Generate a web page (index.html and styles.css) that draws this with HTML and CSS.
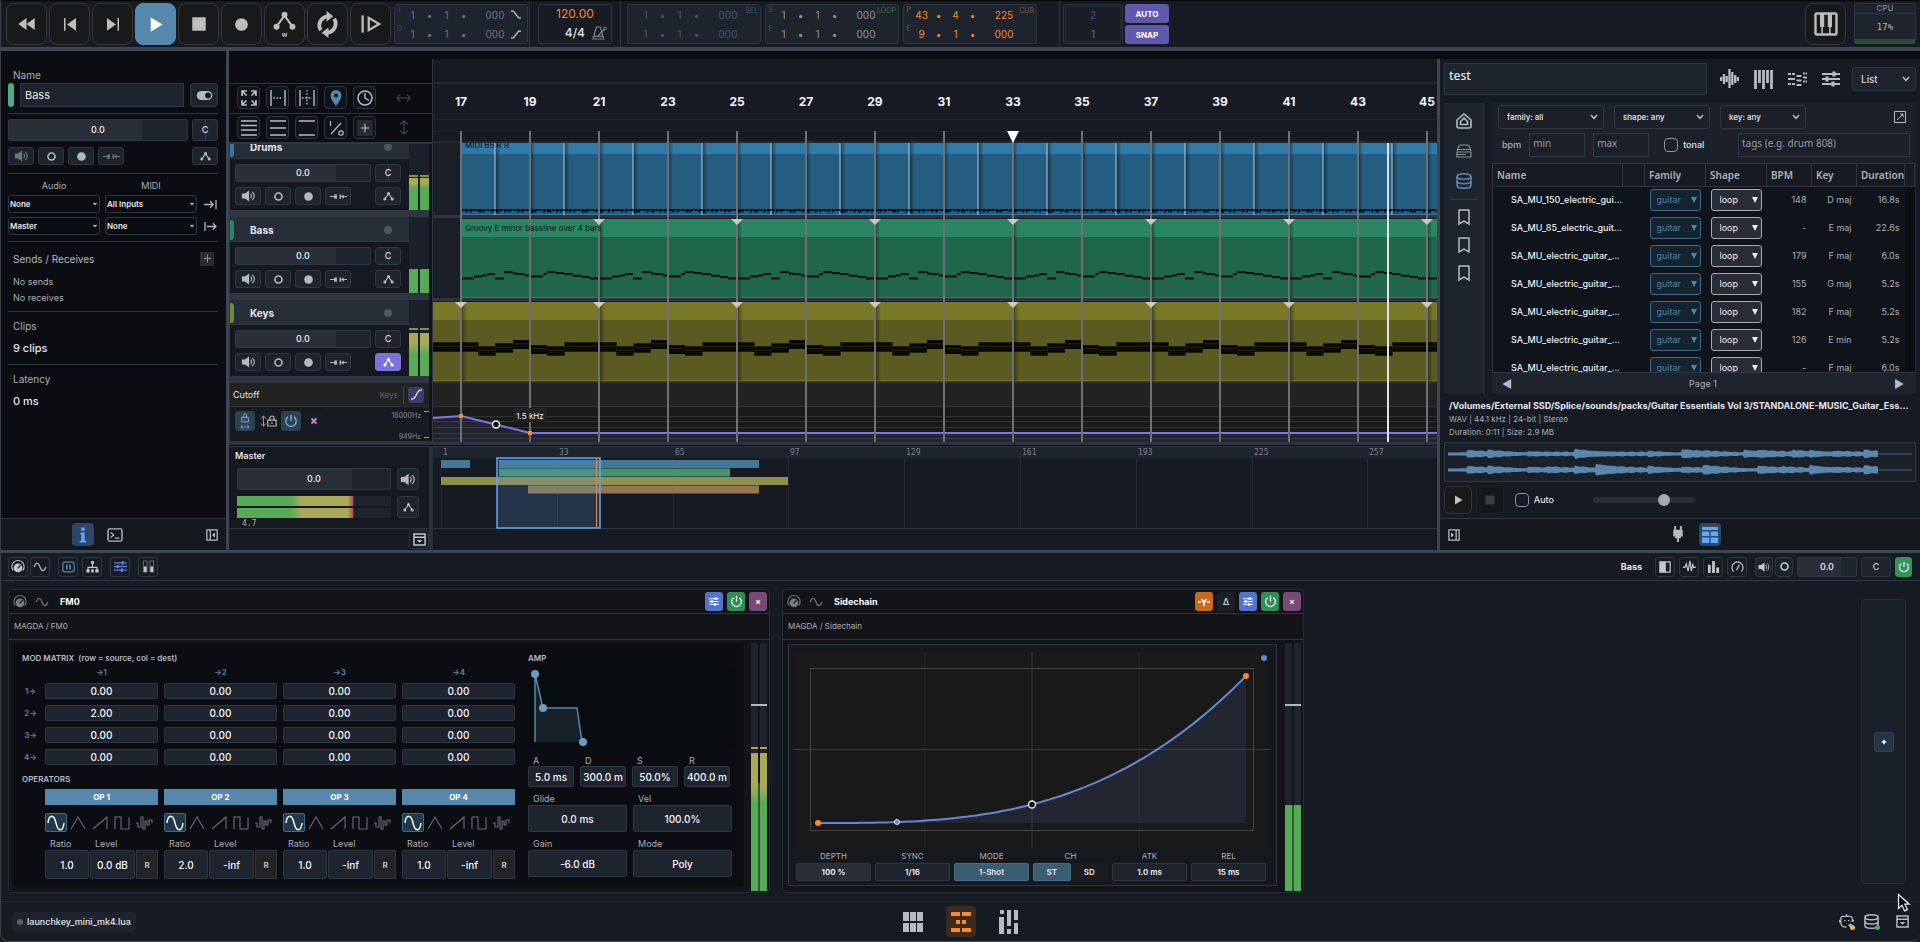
FILE: index.html
```html
<!DOCTYPE html>
<html lang="en">
<head>
<meta charset="utf-8">
<title>MAGDA</title>
<link rel="stylesheet" href="styles.css">
</head>
<body>
<svg class="sprite" aria-hidden="true">
  <symbol id="rewind" viewBox="0 0 24 24"><path fill="currentColor" d="M12 4v16L1 12zM23 4v16l-11-8z"/></symbol>
  <symbol id="prev" viewBox="0 0 24 24"><path fill="currentColor" d="M4 4h2v17H4zM20 4v17L8 12.500z"/></symbol>
  <symbol id="next" viewBox="0 0 24 24"><path fill="currentColor" d="M18 4h2v17h-2zM4 4v17l12-8.500z"/></symbol>
  <symbol id="play" viewBox="0 0 24 24"><path fill="currentColor" d="M6 3v18l15-9z"/></symbol>
  <symbol id="stop" viewBox="0 0 24 24"><path fill="currentColor" d="M3 3h18v18H3z"/></symbol>
  <symbol id="dot" viewBox="0 0 24 24"><circle cx="12" cy="12" r="8" fill="currentColor"/></symbol>
  <symbol id="ring" viewBox="0 0 24 24"><circle cx="12" cy="12" r="6.500" fill="none" stroke="currentColor" stroke-width="3"/></symbol>
  <symbol id="nodes" viewBox="0 0 24 24"><path d="M4 17l8-11 8 11" fill="none" stroke="currentColor" stroke-width="2.600"/><g fill="currentColor"><circle cx="4" cy="17.500" r="3.400"/><circle cx="12" cy="5.500" r="3.400"/><circle cx="20" cy="17.500" r="3.400"/></g></symbol>
  <symbol id="nodesw" viewBox="0 0 24 30"><path d="M4 17l8-11 8 11" fill="none" stroke="currentColor" stroke-width="2.200"/><g fill="currentColor"><circle cx="3.500" cy="18" r="3.200"/><circle cx="12" cy="5" r="3.200"/><circle cx="20.500" cy="18" r="3.200"/></g><text x="12" y="28.500" text-anchor="middle" font-size="7" font-weight="700" fill="currentColor">w</text></symbol>
  <symbol id="loop" viewBox="0 0 24 28"><path d="M5 20A9.500 9.500 0 0 1 12 5.500M19 8a9.500 9.500 0 0 1-7 14.500" fill="none" stroke="currentColor" stroke-width="4"/><path fill="currentColor" d="M11 0l7 5.500-7 5.500zM13 28l-7-5.500 7-5.500z"/></symbol>
  <symbol id="playfrom" viewBox="0 0 24 24"><path fill="none" stroke="currentColor" stroke-width="2.600" d="M3 2v20M10 5l12 7-12 7z"/></symbol>
  <symbol id="falloff" viewBox="0 0 14 10"><path fill="none" stroke="currentColor" stroke-width="1.600" d="M1 1h3l6 8h3"/></symbol>
  <symbol id="riseup" viewBox="0 0 14 10"><path fill="none" stroke="currentColor" stroke-width="1.600" d="M1 9h3l6-8h3"/></symbol>
  <symbol id="metro" viewBox="0 0 24 24"><path fill="none" stroke="currentColor" stroke-width="1.800" d="M8 3h6l5 18H3zM4 17h14M10 17L20 6"/><circle cx="21" cy="5" r="2" fill="none" stroke="currentColor" stroke-width="1.500"/></symbol>
  <symbol id="piano" viewBox="0 0 24 24"><rect x="1.500" y="1.500" width="21" height="21" rx="1.500" fill="none" stroke="currentColor" stroke-width="2.400"/><path fill="currentColor" d="M6 2h4.200v13H6zM13.800 2H18v13h-4.200z"/><path d="M8.100 14v8M15.900 14v8" stroke="currentColor" stroke-width="1.500"/></symbol>
  <symbol id="toggle" viewBox="0 0 24 14"><rect width="24" height="14" rx="7" fill="currentColor"/><circle cx="17.500" cy="7" r="4.500" fill="#14181e"/></symbol>
  <symbol id="speaker" viewBox="0 0 24 20"><path fill="currentColor" d="M1 6h5l7-5v18l-7-5H1z"/><path fill="none" stroke="currentColor" stroke-width="1.800" d="M15.500 6c2 2.500 2 5.500 0 8M18.500 3c4 4.500 4 9.500 0 14"/></symbol>
  <symbol id="link" viewBox="0 0 32 12"><path fill="currentColor" d="M0 5h8V2h5v8H8V7H0zM18 2h3v8h-3zM21 6l5-4v3h6v2h-6v3z"/></symbol>
  <symbol id="toin" viewBox="0 0 14 12"><path fill="none" stroke="currentColor" stroke-width="1.400" d="M13 1v10M0 6h10M6.500 2.500L10 6l-3.500 3.500"/></symbol>
  <symbol id="toout" viewBox="0 0 14 12"><path fill="none" stroke="currentColor" stroke-width="1.400" d="M1 1v10M3 6h10M9.500 2.500L13 6 9.500 9.500"/></symbol>
  <symbol id="plus" viewBox="0 0 12 12"><path stroke="currentColor" stroke-width="1.400" d="M6 1v10M1 6h10"/></symbol>
  <symbol id="plusb" viewBox="0 0 12 12"><path stroke="currentColor" stroke-width="3" d="M6 1.500v9M1.500 6h9"/></symbol>
  <symbol id="info" viewBox="0 0 12 18"><path fill="currentColor" d="M4 0h4v4H4zM3 6h5v10h2v2H2v-2h2V8H3z"/></symbol>
  <symbol id="term" viewBox="0 0 18 16"><rect x="1" y="1" width="16" height="14" rx="2" fill="none" stroke="currentColor" stroke-width="1.600"/><path fill="none" stroke="currentColor" stroke-width="1.500" d="M4 5l3.500 3L4 11M9 11.500h5"/></symbol>
  <symbol id="dock" viewBox="0 0 14 14"><path fill="none" stroke="currentColor" stroke-width="1.500" d="M1 1h12v12H1zM5 1v12"/><path fill="currentColor" d="M10.500 4v6L7 7z"/></symbol>
  <symbol id="dockr" viewBox="0 0 14 14"><path fill="none" stroke="currentColor" stroke-width="1.500" d="M1 1h12v12H1zM9.500 1v12"/><path fill="currentColor" d="M3.500 4v6L7 7z"/></symbol>
  <symbol id="expand" viewBox="0 0 16 16"><path fill="none" stroke="currentColor" stroke-width="1.700" d="M1 6V1h5M1.500 1.500l4 4M10 1h5v5M14.500 1.500l-4 4M1 10v5h5M1.500 14.500l4-4M15 10v5h-5M14.500 14.500l-4-4"/></symbol>
  <symbol id="fitsel" viewBox="0 0 16 16"><path stroke="currentColor" stroke-width="1.400" d="M1 0v16M15 0v16"/><path stroke="currentColor" stroke-width="1.400" stroke-dasharray="1.500 1.500" d="M3.500 8h9"/></symbol>
  <symbol id="gridsnap" viewBox="0 0 16 16"><path stroke="currentColor" stroke-width="1.400" d="M1 0v16M15 0v16"/><path stroke="currentColor" stroke-width="1.300" stroke-dasharray="1.600 1.600" d="M3 8h10M8 0v16"/></symbol>
  <symbol id="pin" viewBox="0 0 12 16"><path fill="currentColor" fill-rule="evenodd" d="M6 0a5.500 5.500 0 0 1 5.500 5.500C11.500 9.500 6 16 6 16S.5 9.500.5 5.500A5.500 5.500 0 0 1 6 0zm0 3.600a2 2 0 1 0 0 4 2 2 0 0 0 0-4z"/></symbol>
  <symbol id="clock" viewBox="0 0 16 16"><circle cx="8" cy="8" r="7" fill="none" stroke="currentColor" stroke-width="1.500"/><path fill="none" stroke="currentColor" stroke-width="1.400" d="M8 3v5l4 2.500"/></symbol>
  <symbol id="harrow" viewBox="0 0 16 10"><path fill="none" stroke="currentColor" stroke-width="1.200" d="M1 5h14M4.500 1L1 5l3.500 4M11.500 1L15 5l-3.500 4"/></symbol>
  <symbol id="varrow" viewBox="0 0 10 16"><path fill="none" stroke="currentColor" stroke-width="1.200" d="M5 1v14M1 4.500L5 1l4 3.500M1 11.500L5 15l4-3.500"/></symbol>
  <symbol id="rows4" viewBox="0 0 16 16"><path stroke="currentColor" stroke-width="1.500" d="M0 1h16M0 5.500h16M0 10h16M0 15h16"/></symbol>
  <symbol id="rows3" viewBox="0 0 16 16"><path stroke="currentColor" stroke-width="1.500" d="M0 1h16M0 8h16M0 15h16"/></symbol>
  <symbol id="rows2" viewBox="0 0 16 16"><path stroke="currentColor" stroke-width="1.500" d="M0 1h16M0 15h16"/></symbol>
  <symbol id="io" viewBox="0 0 16 16"><path fill="none" stroke="currentColor" stroke-width="1.200" d="M2.500 1v5M3 14L13 3"/><circle cx="13" cy="13" r="2.200" fill="none" stroke="currentColor" stroke-width="1.200"/></symbol>
  <symbol id="scurve" viewBox="0 0 12 12"><path fill="none" stroke="currentColor" stroke-width="1.400" d="M0 11c8 0 4-10 12-10"/></symbol>
  <symbol id="lock" viewBox="0 0 12 14"><path fill="none" stroke="currentColor" stroke-width="1.400" d="M1 6h10v7H1zM3.500 6V3.500a2.500 2.500 0 0 1 5 0V6M6 8.500v2"/></symbol>
  <symbol id="power" viewBox="0 0 16 16"><path fill="none" stroke="currentColor" stroke-width="1.500" d="M8 1v7M4.500 3.300a6 6 0 1 0 7 0"/></symbol>
  <symbol id="x" viewBox="0 0 8 8"><path stroke="currentColor" stroke-width="1.800" d="M1.500 1.500l5 5M6.500 1.500l-5 5"/></symbol>
  <symbol id="tray" viewBox="0 0 14 14"><path fill="none" stroke="currentColor" stroke-width="1.600" d="M1 1h12v12H1zM1 4.500h12"/><path fill="currentColor" d="M4 7.500h6L7 10.500z"/></symbol>
  <symbol id="wavebars" viewBox="0 0 19 20"><path stroke="currentColor" stroke-width="2.300" d="M1.200 8v4M4 5v10M6.700 7v6M9.500 0v19M12.300 3v13M15.200 6v8M18 8v4"/></symbol>
  <symbol id="keys" viewBox="0 0 19 19"><path stroke="currentColor" stroke-width="2.800" d="M1.500 0v19M5.500 0v13M9.500 0v19M13.500 0v13M17.500 0v19"/></symbol>
  <symbol id="steps" viewBox="0 0 19 16"><path fill="currentColor" d="M0 2h3v2H0zM4 2h3v2H4zM0 7h7v2H0zM0 12h3v2H0zM4 12h3v2H4zM8.500 4h5v2h-5zM8.500 8.500h5v2h-5zM8.500 13h5v2h-5zM15 1.500h1.800v2H15zM17.500 1.500H19v2h-1.500zM15 5.500h4v2h-4zM15 9.500h1.800v2H15zM17.500 9.500H19v2h-1.500z"/></symbol>
  <symbol id="sliders" viewBox="0 0 18 16"><path stroke="currentColor" stroke-width="1.800" d="M0 3h18M0 8h18M0 13h18"/><path stroke="currentColor" stroke-width="3.200" d="M12 .5v5M5 5.500v5M11 10.500v5"/></symbol>
  <symbol id="chev" viewBox="0 0 8 6"><path fill="none" stroke="currentColor" stroke-width="1.400" d="M1 1l3 3.500L7 1"/></symbol>
  <symbol id="tick" viewBox="0 0 8 6"><path fill="none" stroke="currentColor" stroke-width="1.200" d="M2.500 2L4 3.500 5.500 2"/></symbol>
  <symbol id="tri" viewBox="0 0 8 6"><path fill="currentColor" d="M1 0h6L4 6z"/></symbol>
  <symbol id="home" viewBox="0 0 16 16"><path fill="none" stroke="currentColor" stroke-width="1.600" d="M1 7l7-6 7 6v6a2 2 0 0 1-2 2H3a2 2 0 0 1-2-2zM4.500 11.500V8.500L8 5l3.500 3.500v3z"/></symbol>
  <symbol id="drive" viewBox="0 0 16 14"><path fill="none" stroke="currentColor" stroke-width="1.200" d="M1 7l2-5q.5-1 2-1h6q1.500 0 2 1l2 5M1 5.500h14M1 8h14v5H1zM1 10.500h9"/></symbol>
  <symbol id="db" viewBox="0 0 16 16"><g fill="none" stroke="currentColor" stroke-width="1.600"><ellipse cx="8" cy="3.500" rx="7" ry="2.700"/><path d="M1 3.500v9c0 1.500 3 2.700 7 2.700s7-1.200 7-2.700v-9M1 8c0 1.500 3 2.700 7 2.700s7-1.200 7-2.700"/></g></symbol>
  <symbol id="mark" viewBox="0 0 12 16"><path fill="none" stroke="currentColor" stroke-width="1.500" d="M1 1h10v14l-5-3-5 3z"/></symbol>
  <symbol id="export" viewBox="0 0 12 12"><path fill="none" stroke="currentColor" stroke-width="1" d="M.5 .5h11v11H.5zM3 9l6-6M6 3h3v3"/></symbol>
  <symbol id="plug" viewBox="0 0 12 18"><path fill="currentColor" d="M2 0h2v4h4V0h2v4h1v7H9v2H7v4H5v-4H3v-2H1V4h1z"/></symbol>
  <symbol id="table" viewBox="0 0 16 16"><path fill="currentColor" d="M0 0h16v3H0zM0 4.500h7.300v4.500H0zM8.700 4.500H16v4.500H8.700zM0 10.500h7.300V16H0zM8.700 10.500H16V16H8.700z"/></symbol>
  <symbol id="knob" viewBox="0 0 16 16"><path fill="none" stroke="currentColor" stroke-width="1.200" d="M2.500 12a7 7 0 1 1 11 0"/><circle cx="8" cy="9" r="5" fill="currentColor"/><path stroke="#15181f" stroke-width="1.300" d="M7.500 9.500L11 6"/></symbol>
  <symbol id="sine" viewBox="0 0 16 12"><path fill="none" stroke="currentColor" stroke-width="1.300" d="M1 6c2-6 5-6 7 0s5 6 7 0"/></symbol>
  <symbol id="modbox" viewBox="0 0 16 14"><rect x="1" y="1" width="14" height="12" rx="2.500" fill="none" stroke="currentColor" stroke-width="1.500"/><path fill="none" stroke="currentColor" stroke-width="2" d="M6 4v6M10 4v6"/></symbol>
  <symbol id="tree" viewBox="0 0 16 16"><path fill="none" stroke="currentColor" stroke-width="1.400" d="M8 3v6M2.500 13V9h11v4"/><g fill="currentColor"><circle cx="8" cy="3" r="2"/><path d="M.5 11.500h4v4h-4zM6.500 11.500h3v4h-3zM11.500 11.500h4v4h-4z"/></g></symbol>
  <symbol id="meters" viewBox="0 0 14 14"><path fill="none" stroke="currentColor" opacity=".5" d="M1.500 1h4v12h-4zM8.500 1h4v12h-4z"/><path fill="currentColor" d="M2 7h3v6H2zM9 7h3v6H9z"/></symbol>
  <symbol id="half" viewBox="0 0 14 14"><path fill="none" stroke="currentColor" stroke-width="1.400" d="M1 1h12v12H1z"/><path fill="currentColor" d="M1 1h7v12H1z"/></symbol>
  <symbol id="pulse" viewBox="0 0 14 14"><path fill="none" stroke="currentColor" stroke-width="1.300" d="M0 8h2l1.500-4 2 8L7.500 1 9 12l1.500-7 1 3H14"/></symbol>
  <symbol id="chart" viewBox="0 0 14 14"><path fill="currentColor" d="M1 5h3v9H1zM5.500 1h3v13h-3zM10 8h3v6h-3z"/></symbol>
  <symbol id="gauge" viewBox="0 0 14 14"><path fill="none" stroke="currentColor" stroke-width="1.300" d="M3 12.500a6 6 0 1 1 8 0M6 11l3-6"/></symbol>
  <symbol id="spark" viewBox="0 0 14 14"><path fill="none" stroke="currentColor" stroke-width="1.500" d="M0 7h3.500M10.500 7H14M4 3.500L7 7l3-3.500"/><path fill="currentColor" d="M4 5.500h6L7 10zM6.200 8h1.600v4H6.200z"/></symbol>
  <symbol id="w-sine" viewBox="0 0 18 16"><path fill="none" stroke="currentColor" stroke-width="1.400" d="M1 8c1-9 6-9 8 0s7 9 8 0"/></symbol>
  <symbol id="w-tri" viewBox="0 0 18 16"><path fill="none" stroke="currentColor" stroke-width="1.100" d="M2 14L9 2l7 12"/></symbol>
  <symbol id="w-saw" viewBox="0 0 18 16"><path fill="none" stroke="currentColor" stroke-width="1.100" d="M2 14L16 2v12"/></symbol>
  <symbol id="w-sq" viewBox="0 0 18 16"><path fill="none" stroke="currentColor" stroke-width="1.100" d="M2 14V2h6v12h8V2"/></symbol>
  <symbol id="w-noise" viewBox="0 0 18 16"><path fill="none" stroke="currentColor" stroke-width="1.100" d="M1 8h2v4h3V2h2v12h2V6h2v4h2V5h3v3"/></symbol>
  <symbol id="v-grid" viewBox="0 0 20 20"><path fill="currentColor" d="M0 0h6v9H0zM7 0h6v9H7zM14 0h6v9h-6zM0 11h6v9H0zM7 11h6v9H7zM14 11h6v9h-6z"/></symbol>
  <symbol id="v-arr" viewBox="0 0 20 20"><path fill="currentColor" d="M0 0h9v4H0zM11 0h9v4h-9zM5 8h4v4H5zM11 8h4v4h-4zM0 16h9v4H0zM11 16h9v4h-9z"/></symbol>
  <symbol id="v-mix" viewBox="0 0 20 24"><path fill="currentColor" d="M1 0h4v4H1zM0 7h5v17H0zM8 0h4v16H8zM8 19h4v5H8zM15 0h4v10h-4zM15 13h4v11h-4z"/></symbol>
  <symbol id="robot" viewBox="0 0 16 16"><path fill="none" stroke="currentColor" stroke-width="1.400" d="M8 0v3M4 2.500h8q2 0 2 2v4M2 4.500q0-2 2-2M2 4.500v5q0 4.500 6 4.500M.5 6v3M15.500 6v2M5.500 7h1.500M9.500 7h1.500M12 10v4M10 12h4"/></symbol>
</svg>

<div class="app">
  <header class="topbar">
    <div class="transport" id="transport"></div>
    <div class="posbox punch" data-pos="I|1|1|000|@falloff;O|1|1|000|@riseup"></div>
    <div class="group tempo-group">
      <div class="tempo"><span class="bpm">120.00</span><span class="sig">4/4</span><button class="bare" aria-label="Metronome"><svg width="16" height="16"><use href="#metro"/></svg></button></div>
    </div>
    <div class="group pos-group">
      <div class="posbox sel" data-pos="|1|1|000|SEL;|1|1|000|"></div>
      <div class="posbox loopbox" data-pos="S|1|1|000|LOOP;E|1|1|000|"></div>
      <div class="posbox cur" data-pos="P|43|4|225|CUR;E|9|1|000|"></div>
    </div>
    <div class="group quant-group">
      <div class="quant"><span>2</span><span>1</span></div>
      <div class="modes"><button>AUTO</button><button>SNAP</button></div>
    </div>
    <div class="top-right">
      <button class="tbtn" aria-label="Keyboard"><svg width="24" height="24"><use href="#piano"/></svg></button>
      <div class="cpu"><span>CPU</span><b>17%</b></div>
    </div>
  </header>

  <main class="upper">
    <aside class="inspector">
      <div class="insp-body">
        <label class="lbl" for="tname">Name</label>
        <div class="row name-row"><i class="swatch"></i><input id="tname" class="field" value="Bass"><button class="ib tog" aria-label="Enabled"><svg width="17" height="9"><use href="#toggle"/></svg></button></div>
        <hr>
        <div class="row vol-row"><label class="fader big"><input type="range" value="75" aria-label="Volume"><output>0.0</output></label><button class="ib pan">C</button></div>
        <div class="row btn-row" data-strip="dim"></div>
        <hr>
        <div class="routes">
          <span class="rh">Audio</span><span class="rh">MIDI</span><i></i>
          <label class="pick small"><select aria-label="Audio input"><option>None</option></select><svg width="8" height="6"><use href="#tick"/></svg></label>
          <label class="pick small"><select aria-label="MIDI input"><option>All Inputs</option></select><svg width="8" height="6"><use href="#tick"/></svg></label>
          <svg width="13" height="11"><use href="#toin"/></svg>
          <label class="pick small"><select aria-label="Audio output"><option>Master</option></select><svg width="8" height="6"><use href="#tick"/></svg></label>
          <label class="pick small"><select aria-label="MIDI output"><option>None</option></select><svg width="8" height="6"><use href="#tick"/></svg></label>
          <svg width="13" height="11"><use href="#toout"/></svg>
        </div>
        <hr>
        <div class="sends"><span>Sends / Receives</span><button class="add" aria-label="Add send"><svg width="9" height="9"><use href="#plus"/></svg></button></div>
        <p class="note">No sends</p><p class="note">No receives</p>
        <hr>
        <p class="lbl">Clips</p><p class="val">9 clips</p>
        <hr>
        <p class="lbl">Latency</p><p class="val">0 ms</p>
      </div>
      <footer class="dockbar">
        <span class="dock-tabs"><button class="dtab on" aria-label="Info"><svg width="10" height="16"><use href="#info"/></svg></button><button class="dtab" aria-label="Console"><svg width="16" height="14"><use href="#term"/></svg></button></span>
        <button class="bare" aria-label="Collapse"><svg width="12" height="12"><use href="#dock"/></svg></button>
      </footer>
    </aside>

    <section class="arrange">
      <div class="tools">
        <div class="toolrow" data-icons="expand fitsel gridsnap pin clock harrow"></div>
        <div class="toolrow" data-icons="rows4 rows3 rows2 io plus varrow"></div>
      </div>
      <svg class="ruler" id="ruler" width="100%" height="84"></svg>
      <div class="heads"><div id="heads"></div>
        <div class="auto-head">
          <div class="auto-name"><span>Cutoff</span><em>Keys</em><button class="curve" aria-label="Curve"><svg width="11" height="11"><use href="#scurve"/></svg></button></div>
          <div class="auto-body">
            <button class="ab on stack" aria-label="Lock time"><svg width="8" height="10"><use href="#lock"/></svg><svg width="10" height="6"><use href="#harrow"/></svg></button>
            <button class="ab" aria-label="Lock value"><svg width="7" height="12"><use href="#varrow"/></svg><svg width="10" height="12"><use href="#lock"/></svg></button>
            <button class="ab on" aria-label="Bypass"><svg width="14" height="14"><use href="#power"/></svg></button>
            <button class="ab close" aria-label="Remove"><svg width="8" height="8"><use href="#x"/></svg></button>
            <span class="scale"><i>18000Hz</i><i>949Hz</i></span>
          </div>
        </div>
      </div>
      <div class="lanes"><svg id="lanes" width="100%" height="308"></svg></div>
      <div class="hsplit"></div>
      <div class="master">
        <span class="mname">Master</span>
        <label class="fader big"><input type="range" value="75" aria-label="Master volume"><output>0.0</output></label>
        <button class="ib sq" aria-label="Mute"><svg width="16" height="13"><use href="#speaker"/></svg></button>
        <div class="mmeter"><i></i><i></i><small>4.7</small></div>
        <button class="ib sq" aria-label="Automation"><svg width="13" height="11"><use href="#nodes"/></svg></button>
      </div>
      <svg class="overview" id="overview" width="100%" height="83"></svg>
      <div class="strip"><button class="ib tray" aria-label="Tray"><svg width="13" height="13"><use href="#tray"/></svg></button></div>
      <div class="strip"></div>
    </section>

    <aside class="browser">
      <div class="searchrow">
        <input class="field search" value="test" aria-label="Search">
        <button class="bare" aria-label="Audio"><svg width="19" height="20"><use href="#wavebars"/></svg></button>
        <button class="bare" aria-label="MIDI"><svg width="19" height="19"><use href="#keys"/></svg></button>
        <button class="bare" aria-label="Drums"><svg width="19" height="16"><use href="#steps"/></svg></button>
        <button class="bare" aria-label="Presets"><svg width="18" height="16"><use href="#sliders"/></svg></button>
        <label class="pick list"><select aria-label="View"><option>List</option></select><svg width="8" height="6"><use href="#chev"/></svg></label>
      </div>
      <div class="library">
        <nav class="side">
          <button class="bare" aria-label="Home"><svg width="16" height="16"><use href="#home"/></svg></button>
          <button class="bare dim" aria-label="Drive"><svg width="16" height="14"><use href="#drive"/></svg></button>
          <button class="bare blue" aria-label="Database"><svg width="16" height="16"><use href="#db"/></svg></button>
          <hr>
          <button class="bare" aria-label="Bookmark 1"><svg width="12" height="16"><use href="#mark"/></svg></button>
          <button class="bare" aria-label="Bookmark 2"><svg width="12" height="16"><use href="#mark"/></svg></button>
          <button class="bare" aria-label="Bookmark 3"><svg width="12" height="16"><use href="#mark"/></svg></button>
        </nav>
        <div class="results">
          <div class="filters">
            <label class="pick f1"><select aria-label="Family"><option>family: all</option></select><svg width="8" height="6"><use href="#chev"/></svg></label>
            <label class="pick f2"><select aria-label="Shape"><option>shape: any</option></select><svg width="8" height="6"><use href="#chev"/></svg></label>
            <label class="pick f3"><select aria-label="Key"><option>key: any</option></select><svg width="8" height="6"><use href="#chev"/></svg></label>
            <button class="bare" aria-label="Open"><svg width="12" height="12"><use href="#export"/></svg></button>
          </div>
          <div class="filters second">
            <label for="bmin">bpm</label><input id="bmin" class="field fb" placeholder="min"><input class="field fb" placeholder="max" aria-label="Maximum bpm">
            <label class="chk"><input type="checkbox">tonal</label>
            <input class="field tags" placeholder="tags (e.g. drum 808)" aria-label="Tags">
          </div>
          <div class="tablewrap">
            <table><colgroup><col><col class="c1"><col class="c2"><col class="c2"><col class="c3"><col class="c3"><col class="c4"><col class="c5"></colgroup>
              <thead><tr><th>Name</th><th></th><th>Family</th><th>Shape</th><th>BPM</th><th>Key</th><th>Duration</th><th></th></tr></thead>
              <tbody id="samples"></tbody></table>
          </div>
          <div class="pager"><button class="bare" aria-label="Previous page">◀</button><span>Page 1</span><button class="bare" aria-label="Next page">▶</button></div>
        </div>
      </div>
      <div class="meta"><b>/Volumes/External SSD/Splice/sounds/packs/Guitar Essentials Vol 3/STANDALONE-MUSIC_Guitar_Essentials_Vol_3</b><span>WAV | 44.1 kHz | 24-bit | Stereo</span><span>Duration: 0:11 | Size: 2.9 MB</span></div>
      <div class="wavebox"><svg id="wave" width="100%" height="38" viewBox="0 0 464 38" preserveAspectRatio="none"></svg></div>
      <div class="preview">
        <button class="pv" aria-label="Preview"><svg width="12" height="12"><use href="#play"/></svg></button><button class="pv off" aria-label="Stop preview"><svg width="12" height="12"><use href="#stop"/></svg></button>
        <label class="chk auto"><input type="checkbox">Auto</label>
        <input class="gain" type="range" value="72" aria-label="Preview gain">
      </div>
      <footer class="dockbar">
        <button class="bare" aria-label="Collapse"><svg width="12" height="12"><use href="#dockr"/></svg></button>
        <span class="dock-tabs"><button class="dtab" aria-label="Plugins"><svg width="12" height="17"><use href="#plug"/></svg></button><button class="dtab on" aria-label="Media"><svg width="16" height="16"><use href="#table"/></svg></button></span>
      </footer>
    </aside>
  </main>

  <section class="chainbar">
    <div class="cb-left">
      <button class="cb" aria-label="Macros"><svg width="14" height="14"><use href="#knob"/></svg></button>
      <button class="cb" aria-label="Modulators"><svg width="14" height="10"><use href="#sine"/></svg></button>
      <button class="cb blue gap" aria-label="Racks"><svg width="13" height="12"><use href="#modbox"/></svg></button>
      <button class="cb gap2" aria-label="Tree"><svg width="13" height="13"><use href="#tree"/></svg></button>
      <button class="cb indigo gap" aria-label="Parameters"><svg width="13" height="13"><use href="#sliders"/></svg></button>
      <button class="cb gap" aria-label="Meters"><svg width="13" height="13"><use href="#meters"/></svg></button>
    </div>
    <div class="cb-right">
      <b>Bass</b>
      <button class="cb" aria-label="Panel"><svg width="12" height="12"><use href="#half"/></svg></button>
      <button class="cb" aria-label="Scope"><svg width="13" height="13"><use href="#pulse"/></svg></button>
      <button class="cb" aria-label="Spectrum"><svg width="13" height="13"><use href="#chart"/></svg></button>
      <button class="cb" aria-label="Level"><svg width="13" height="13"><use href="#gauge"/></svg></button>
      <span class="pair"><button class="cb nar" aria-label="Mute"><svg width="12" height="10"><use href="#speaker"/></svg></button><button class="cb nar" aria-label="Solo"><svg width="13" height="13"><use href="#ring"/></svg></button></span>
      <label class="fader"><input type="range" value="75" aria-label="Chain volume"><output>0.0</output></label>
      <button class="cb pan">C</button>
      <button class="cb power" aria-label="Power"><svg width="12" height="12"><use href="#power"/></svg></button>
    </div>
  </section>

  <section class="chain">
    <article class="device fm">
      <header><svg width="14" height="14"><use href="#knob"/></svg><svg width="14" height="10"><use href="#sine"/></svg><h2>FM0</h2>
        <button class="hb indigo" aria-label="Parameters"><svg width="10" height="9"><use href="#sliders"/></svg></button><button class="hb green" aria-label="Power"><svg width="13" height="13"><use href="#power"/></svg></button><button class="hb plum" aria-label="Remove"><svg width="6" height="6"><use href="#x"/></svg></button></header>
      <p class="vendor">MAGDA / FM0</p>
      <div class="dev-body">
        <div class="fm-ui">
          <div class="fm-left">
            <h3>MOD MATRIX&nbsp; (row = source, col = dest)</h3>
            <div class="matrix" id="matrix"></div>
            <h3>OPERATORS</h3>
            <div class="ops" id="ops"></div>
          </div>
          <div class="fm-right">
            <h3>AMP</h3>
            <svg class="env" width="202" height="78"><rect width="202" height="78" rx="3" fill="#070c0e"/><path d="M5 73V5l8 34h34l5 34z" fill="#16212a"/><path d="M5 73V5l8 34h34l5 34" fill="none" stroke="#5688ae" stroke-width="1.500"/><g fill="#6b9cc2"><circle cx="5" cy="5" r="4"/><circle cx="13" cy="39" r="4"/><circle cx="53" cy="73" r="4"/></g></svg>
            <div class="adsr"><label>A<input value="5.0 ms"></label><label>D<input value="300.0 m"></label><label>S<input value="50.0%"></label><label>R<input value="400.0 m"></label></div>
            <div class="pairs"><label>Glide<input value="0.0 ms"></label><label>Vel<input value="100.0%"></label><label>Gain<input value="-6.0 dB"></label><label>Mode<input value="Poly"></label></div>
          </div>
        </div>
        <svg class="vmeter" width="17" height="248"><defs><linearGradient id="vg" x1="0" x2="0" y1="0" y2="1"><stop offset=".25" stop-color="#aaa957"/><stop offset=".36" stop-color="#57ab57"/></linearGradient></defs><path fill="#1e242d" d="M0 0h7v248H0zM9 0h7v248H9z"/><path fill="#2c5a33" d="M7 140h2v108H7z"/><path fill="url(#vg)" d="M0 110h7v138H0zM9 110h7v138H9z"/><path fill="#aaa957" d="M0 104h7v2H0zM9 104h7v2H9z"/><path fill="#b5bac4" d="M0 61h16v2H0z"/></svg>
      </div>
    </article>

    <article class="device sc">
      <header><svg width="14" height="14"><use href="#knob"/></svg><svg width="14" height="10"><use href="#sine"/></svg><h2>Sidechain</h2>
        <button class="hb orange" aria-label="Sidechain"><svg width="12" height="12"><use href="#spark"/></svg></button><button class="hb dark">Δ</button><button class="hb indigo" aria-label="Parameters"><svg width="10" height="9"><use href="#sliders"/></svg></button><button class="hb green" aria-label="Power"><svg width="13" height="13"><use href="#power"/></svg></button><button class="hb plum" aria-label="Remove"><svg width="6" height="6"><use href="#x"/></svg></button></header>
      <p class="vendor">MAGDA / Sidechain</p>
      <div class="dev-body">
        <div class="sc-ui">
          <svg class="shape" width="476" height="196"><rect width="476" height="196" fill="#191919"/><path d="M131 0v196M345 0v196" stroke="#292929"/><path d="M238 0v196M0 97.500h476" stroke="#3b3b3b"/><rect x="16.500" y="16.500" width="443" height="162" fill="none" stroke="#444"/><path id="scfill" fill="#6486d8" fill-opacity=".13"/><path id="scline" fill="none" stroke="#6488d8" stroke-width="2"/><circle cx="24" cy="171" r="3" fill="#ff8a1f"/><circle cx="452" cy="24" r="3" fill="#ff8a1f"/><circle cx="103" cy="170" r="2.500" fill="#5f86d8" stroke="#dfe6f2"/><circle cx="238" cy="152.500" r="3.500" fill="#111" stroke="#f2f2f2" stroke-width="1.300"/><circle cx="470" cy="6" r="3" fill="#6488d8"/></svg>
          <div class="sc-params">
            <label>DEPTH<input class="lit" value="100 %"></label><label>SYNC<input value="1/16"></label>
            <div><span>MODE</span><button class="on">1-Shot</button></div>
            <div><span>CH</span><span class="duo"><button class="on">ST</button><button>SD</button></span></div>
            <label>ATK<input value="1.0 ms"></label><label>REL<input value="15 ms"></label>
          </div>
        </div>
        <svg class="vmeter" width="17" height="248"><path fill="#1e242d" d="M0 0h7v248H0zM9 0h7v248H9z"/><path fill="#2c5a33" d="M7 162h2v86H7z"/><path fill="#57ab57" d="M0 162h7v86H0zM9 162h7v86H9z"/><path fill="#b5bac4" d="M0 61h16v2H0z"/></svg>
      </div>
    </article>
    <div class="adddev"><button aria-label="Add device"><svg width="6" height="6"><use href="#plusb"/></svg></button></div>
  </section>

  <footer class="status">
    <span class="script"><i></i>launchkey_mini_mk4.lua</span>
    <span class="views"><button class="bare" aria-label="Session"><svg width="20" height="20"><use href="#v-grid"/></svg></button><button class="bare on" aria-label="Arrange"><svg width="20" height="20"><use href="#v-arr"/></svg></button><button class="bare" aria-label="Mix"><svg width="20" height="24"><use href="#v-mix"/></svg></button></span>
    <span class="srv"><button class="bare b1" aria-label="Assistant"><svg width="15" height="15"><use href="#robot"/></svg></button><button class="bare b2" aria-label="Database"><svg width="15" height="15"><use href="#db"/></svg></button><button class="bare" aria-label="Tray"><svg width="13" height="13"><use href="#tray"/></svg></button></span>
  </footer>
  <svg class="cursor" width="14" height="20" aria-hidden="true"><path d="M1.500 1.500v14l3.500-3.200 2.600 5.600 2.800-1.300-2.500-5.400h4.300z" fill="#0b0b0b" stroke="#e6e6e6" stroke-width="1.300"/></svg>
</div>
<script src="app.js"></script>
</body>
</html>
```
FILE: styles.css
```css
* { box-sizing: border-box; }
:root {
  --line: #2d3741; --split: #3d4753; --bg: #161a22; --deep: #0c0d12; --ctl: #1e242d;
  --text: #e3e6ea; --mute: #a9b0ba; --blue: #5688ae;
}
body { margin: 0; background: #16191f; color: var(--text); font: 11px/14px Inter, "Liberation Sans", sans-serif; }
button, input, select { font: inherit; color: inherit; margin: 0; padding: 0; min-width: 0; }
button { cursor: default; }
p, h2, h3 { margin: 0; }
svg { display: block; flex: none; }
i, em { font-style: normal; }
hr { border: 0; border-top: 1px solid var(--line); margin: 0; width: 100%; }
.sprite { position: absolute; width: 0; height: 0; }
.app { position: relative; height: 100vh; min-height: 900px; display: flex; flex-direction: column; background: var(--bg); border-left: 1px solid #3a3f45; border-radius: 0 0 8px 8px; overflow: hidden; border-bottom: 1px solid #484c52; }
.bare { background: none; border: 0; display: grid; place-items: center; color: #b5bac4; }

/* top bar */
.topbar { display: flex; height: 51px; border-bottom: 4px solid var(--split); border-top: 1px solid #050607; padding: 0 4px 0 5px; flex: none; }
.transport { display: flex; gap: 2px; padding-top: 2px; margin-right: 3px; }
.tbtn { width: 41px; height: 42px; border: 1px solid #383838; border-radius: 8px; background: #191919; color: #bdbdbd; display: grid; place-items: center; }
.tbtn.on { background: var(--blue); border-color: var(--blue); color: #fff; }
.posbox { position: relative; width: 134px; height: 40px; margin-top: 3px; background: var(--ctl); border: 1px solid var(--line); border-radius: 3px; display: grid; grid-template-columns: 9px 17px 17px 17px 17px 46px; grid-template-rows: 1fr 1fr; place-items: center; font-size: 10px; line-height: 12px; color: #6d747e; }
.posbox small { font-size: 7px; line-height: 9px; align-self: start; color: #454d57; }
.posbox .tag, .posbox svg { position: absolute; right: 2px; top: 1px; }
.posbox svg { color: #c3c7cc; right: 5px; top: 5px; }
.posbox .tag:empty { display: none; }
.posbox svg ~ svg { top: 25px; }
.sel { color: #3f5a70; } .sel .tag { color: #3f5a70; }
.loopbox { color: #8f959e; } .loopbox .tag { color: #2f7355; }
.cur { color: #f5892a; } .cur small { color: #8a5526; }
.group { display: flex; border-left: 1px solid var(--line); }
.tempo-group { padding: 0 8px; margin-left: 1px; }
.tempo { width: 74px; height: 40px; margin-top: 3px; background: #171c24; border: 1px solid var(--line); border-radius: 3px; display: grid; grid-template-columns: 1fr 24px; place-items: center; font-size: 12px; }
.bpm { grid-column: 1 / -1; color: #f5892a; } .sig { justify-self: end; margin-right: 2px; font-weight: 500; }
.tempo .bare { color: #7d838b; }
.pos-group { gap: 4px; padding: 0 22px 0 6px; }
.quant-group { padding-left: 3px; gap: 2px; }
.quant { width: 60px; height: 40px; margin-top: 3px; border: 1px solid var(--line); outline: 1px solid #222932; outline-offset: -3px; border-radius: 3px; background: #191e26; display: grid; place-items: center; color: #666d77; font-size: 10px; }
.quant span:first-child { color: #4d4c87; }
.modes { display: grid; gap: 2px; height: 40px; margin-top: 3px; }
.modes button { width: 44px; background: #5f59ab; border: 0; border-radius: 3px; color: #fff; font-size: 8px; line-height: 10px; font-weight: 700; }
.top-right { margin-left: auto; display: flex; gap: 8px; padding-top: 2px; }
.cpu { width: 62px; height: 41px; background: var(--ctl); border: 1px solid var(--line); border-bottom: 5px solid #2e4d37; border-radius: 3px; display: flex; flex-direction: column; text-align: center; font: 8px/9px "DejaVu Sans Mono", monospace; color: #8f96a0; }
.cpu span { border-bottom: 1px solid var(--line); font-family: Inter, sans-serif; }
.cpu b { font-weight: 400; font-size: 9px; line-height: 26px; color: #b2b7be; }

/* upper area */
.upper { flex: 1; display: flex; min-height: 0; background: #0b0c10; border-bottom: 3px solid var(--split); }
.inspector { width: 228px; flex: none; display: flex; flex-direction: column; background: var(--deep); border-right: 3px solid var(--split); }
.insp-body { flex: 1; padding: 17px 8px 0 7px; display: flex; flex-direction: column; }
.lbl { margin-left: 5px; color: var(--mute); line-height: 14px; font-size: 10px; }
.row { display: flex; }
.name-row { margin: 1px 0 6px; height: 24px; gap: 6px; }
.swatch { width: 6px; background: #4fa888; border-radius: 3px; }
.field { background: var(--ctl); border: 1px solid var(--line); padding: 0 4px; outline: 0; }
.name-row .field { flex: 1; font-size: 11px; }
.ib { background: var(--ctl); border: 1px solid var(--line); border-radius: 3px; display: grid; place-items: center; color: #b5b8bd; }
.tog { width: 28px; }
.fader { position: relative; flex: 1; display: block; height: 18px; }
.fader.big { height: 22px; }
.fader input { display: block; width: 100%; height: 100%; appearance: none; border: 1px solid var(--line); border-radius: 2px; background: linear-gradient(90deg, #292f38 75%, var(--ctl) 75%); }
.fader input::-webkit-slider-thumb { appearance: none; width: 0; height: 0; }
.fader output { position: absolute; inset: 0; display: grid; place-items: center; font-size: 9px; font-weight: 500; color: #eceef0; }
.vol-row { gap: 4px; margin: 5px 0 6px; }
.pan { width: 26px; font-size: 9px; font-weight: 500; color: #d5d8dc; background: linear-gradient(90deg, transparent 12px, #333b45 12px, #333b45 13px, transparent 13px) var(--ctl); }
.btn-row { gap: 4px; height: 18px; }
.btn-row .ib { width: 26px; } .btn-row .ib:last-child { margin-left: auto; }
.btn-row .ib.hot { background: #7a72dd; border-color: #7a72dd; color: #fff; }
[data-strip="dim"] { margin-bottom: 8px; }
[data-strip="dim"] .ib:first-child, [data-strip="dim"] .ib:nth-child(4) { color: #71767d; }
.routes { display: grid; grid-template-columns: 1fr 1fr 16px; gap: 4px 5px; padding: 6px 0 6px; align-items: center; }
.routes > svg { justify-self: center; color: #b3b7bd; }
.rh { text-align: center; font-size: 9px; color: var(--mute); line-height: 11px; }
.pick { display: grid; align-items: center; border: 1px solid var(--line); border-radius: 3px; }
.pick > * { grid-area: 1 / 1; }
.pick select { appearance: none; width: 100%; height: 100%; border: 0; background: none; outline: 0; }
.pick svg { justify-self: end; pointer-events: none; margin-right: 5px; color: #c3c7cc; }
.small { height: 18px; font-size: 8px; line-height: 12px; font-weight: 600; }
.small select { padding-left: 1px; } .small svg { margin-right: 0; }
.sends { display: flex; justify-content: space-between; align-items: center; height: 33px; padding: 0 4px 0 5px; color: #b5bac4; font-size: 10px; }
.add { width: 14px; height: 14px; border: 0; background: #2b2b2e; color: #8c8f94; display: grid; place-items: center; }
.note { font-size: 9px; line-height: 16px; margin-left: 5px; color: var(--mute); }
.note + hr { margin: 5px 0 7px; } .val + hr { margin: 9px 0 7px; }
.val { font-size: 11px; line-height: 14px; margin: 8px 0 0 5px; font-weight: 500; }
.sends + .note { margin-top: -1px; }
.dockbar { height: 32px; flex: none; display: flex; align-items: center; border-top: 1px solid var(--line); background: #14181c; padding: 0 8px; }
.dock-tabs { display: flex; gap: 10px; }
.inspector .dock-tabs { margin: 0 auto; padding-right: 18px; }
.browser .dock-tabs { margin: 0 auto; padding-left: 16px; }
.dtab { width: 22px; height: 23px; border: 0; border-radius: 4px; background: none; color: #b5bac4; display: grid; place-items: center; }
.dtab.on { background: #2c466c; color: #61a8f7; }

/* arrangement */
.arrange { flex: 1; min-width: 0; margin-top: 8px; display: grid; grid-template-columns: 204px minmax(0, 1fr); grid-template-rows: 84px minmax(0, 1fr) 4px 83px 21px; background: var(--bg); }
.tools { background: var(--deep); padding-top: 24px; border-right: 1px solid var(--line); border-bottom: 1px solid var(--line); }
.toolrow { height: 30px; border-top: 1px solid var(--line); display: flex; gap: 6px; padding: 2px 0 0 8px; }
.toolrow .ib { width: 23px; height: 23px; background: #10131a; color: #b5bfc8; border-radius: 4px; }
.toolrow .ib:last-child { background: none; border: 0; color: #444a51; margin-left: 10px; }
.toolrow .pin { color: var(--blue); } .toolrow .plus svg { background: #2a2b2e; padding: 3px; }
.heads, .lanes { overflow: hidden; display: flex; flex-direction: column; justify-content: flex-end; }
.heads { border-right: 4px solid #10141a; outline: 1px solid var(--line); outline-offset: -1px; }
.track { height: 83px; flex: none; background: #2d3641; display: grid; grid-template-columns: 1fr 20px; grid-template-rows: 24px 52px; }
.track .thead { display: flex; align-items: center; justify-content: space-between; background: #262e38; padding-top: 2px; }
.thead b { font-size: 10px; flex: 1; } .thead i { width: 5px; height: 20px; border-radius: 0 3px 3px 0; margin-right: 16px; }
.thead u { width: 8px; height: 8px; border-radius: 4px; background: #4f555d; margin-right: 17px; }
.track .tbody { background: #15181f; border-top: 1px solid var(--line); padding: 5px 8px 0 6px; }
.tbody .row { gap: 4px; } .tbody .btn-row { margin-top: 5px; }
.track svg.m { grid-area: 1 / 2 / 3 / 3; background: #1b212a; }
.auto-head { flex: none; height: 59px; background: #151a21; }
.auto-name { height: 24px; display: flex; align-items: center; background: #222; border-bottom: 1px solid #333; padding: 0 5px 0 4px; font-size: 9px; }
.auto-name em { margin-left: auto; padding-right: 5px; color: #666; font-size: 8px; border-right: 1px solid #444; line-height: 18px; margin-right: 4px; }
.curve { width: 16px; height: 16px; background: #3d3c6b; border: 0; border-radius: 3px; display: grid; place-items: center; }
.auto-body { display: flex; gap: 3px; padding: 4px 0 0 6px; height: 35px; }
.ab { width: 20px; height: 20px; border: 0; border-radius: 3px; background: #191b20; color: #b3b6ba; display: flex; align-items: center; justify-content: center; }
.ab.on { background: #2c4253; color: #83b4d8; } .ab.close { color: #c08bc5; } .stack { flex-direction: column; gap: 1px; }
.scale { margin-left: auto; display: flex; flex-direction: column; justify-content: space-between; text-align: right; font-size: 7px; line-height: 10px; color: #858a91; }
.scale i { display: flex; gap: 3px; justify-content: flex-end; } .scale i::after { content: ""; width: 5px; border-top: 1px solid #9ba0a6; }
.scale i:last-child::after { margin-top: 5px; }
.hsplit { grid-column: 1 / -1; background: #2b343f; border-bottom: 1px solid #0b0d11; }
.master { display: grid; grid-template-columns: 1fr 22px; grid-template-rows: 12px 22px 34px; gap: 6px; padding: 3px 10px 0 8px; background: #15181f; border: 1px solid var(--line); border-left: 0; border-right: 4px solid #262e38; }
.mname { grid-column: 1 / -1; line-height: 12px; font-size: 9px; font-weight: 600; margin-left: -2px; }
.sq { width: 22px; height: 22px; }
.mmeter { display: grid; grid-template-rows: 10px 10px 10px; gap: 2px; }
.mmeter i { background: linear-gradient(90deg, #57ab57 35%, #aaa957 42%, #aaa957 72%, #b0564e 75%, #1e242d 76%); }
.mmeter small { font: 8px/8px "DejaVu Sans Mono", monospace; margin-left: 5px; color: var(--mute); }
.strip { background: var(--bg); }
.strip:nth-last-child(2) { border-right: 4px solid #262e38; display: flex; justify-content: flex-end; }
.tray { width: 20px; height: 19px; background: #171c24; color: #c3c7cc; margin-top: 1px; }
.ruler, .lanes svg, .overview { overflow: hidden; }

/* browser */
.browser { width: 483px; flex: none; margin-top: 8px; border-left: 3px solid var(--split); background: var(--bg); display: flex; flex-direction: column; }
.browser .dockbar { margin-top: auto; }
.searchrow { display: flex; align-items: center; padding: 4px 4px 8px; gap: 15px; }
.search { flex: 1; height: 32px; font: 500 12px/16px "Noto Sans", sans-serif; padding: 0 4px 8px; margin-right: -2px; }
.list { width: 64px; height: 24px; background: var(--ctl); margin-left: -3px; font-size: 10px; } .list select { padding-left: 8px; }
.library { flex: 1; display: flex; gap: 8px; padding: 0 4px; min-height: 0; }
.side { width: 40px; background: #1e242e; border-right: 1px solid var(--line); display: flex; flex-direction: column; align-items: center; padding-top: 10px; gap: 14px; }
.side hr { width: 30px; margin-top: -4px; margin-bottom: -5px; } .side .bare { min-height: 16px; } .side hr ~ .bare { margin-bottom: -2px; }
.dim { color: #878d96; } .blue { color: var(--blue); }
.results { flex: 1; min-width: 0; background: #1b2029; display: flex; flex-direction: column; }
.filters { display: flex; padding: 2px 10px 0 6px; gap: 10px; font-size: 8px; font-weight: 500; }
.filters .pick { height: 24px; background: #1b1f27; } .filters select { padding-left: 8px; }
.f1 { width: 106px; } .f2 { width: 96px; } .f3 { width: 86px; } .filters .bare { margin-left: auto; }
.second { padding: 4px 6px 6px 10px; gap: 8px; align-items: center; font-size: 9px; color: var(--mute); }
.second .field { height: 24px; font: 10px/14px "Noto Sans", sans-serif; padding: 0 3px 5px; background: #1b1f27; }
::placeholder { color: #969ca5; opacity: 1; }
.fb { width: 56px; } .tags { width: 172px; margin-left: auto; }
.chk { display: flex; align-items: center; gap: 5px; color: #dfe2e6; } .second .chk { margin-left: 7px; }
.chk input { appearance: none; width: 14px; height: 14px; border: 1px solid #8d939c; border-radius: 4px; }
.tablewrap { flex: 1; min-height: 0; overflow: hidden; background: #0f141a; border: 1px solid var(--line); border-right-color: #222932; }
table { border-collapse: collapse; table-layout: fixed; width: 100%; }
.c1 { width: 22px; } .c2 { width: 61px; } .c3 { width: 45px; } .c4 { width: 48px; } .c5 { width: 10px; }
th { height: 22px; padding: 0 4px; text-align: left; font: 600 10px/14px "Noto Sans", sans-serif; color: #a9b0ba; background: #171b21; border-right: 1px solid var(--line); border-bottom: 1px solid var(--line); }
td { height: 28px; padding: 0 5px; font-size: 9px; text-align: right; color: #a9b0ba; white-space: nowrap; }
td:first-child { text-align: left; padding: 0 0 0 18px; color: #eceef0; font-weight: 500; }
td:nth-child(8) { background: #0c0e12; }
.chip { width: 51px; height: 22px; border-color: #3f6a8a; background: #16242f; color: #4f83a9; margin-left: 0; }
.chip select { padding-left: 6px; } .chip svg { margin-right: 2px; color: inherit; }
.chip.loop { border-color: #a9abae; background: #292d35; color: #eceef0; } .chip.loop select { padding-left: 8px; }
.pager { height: 21px; display: flex; justify-content: space-between; align-items: center; padding: 0 12px 0 10px; background: #1e242e; color: var(--mute); flex: none; }
.pager span { font-size: 9px; }
.meta { display: flex; flex-direction: column; padding: 4px 9px 0; font-size: 8px; line-height: 13px; color: var(--mute); }
.meta b { font-size: 9px; line-height: 15px; color: #e3e6ea; overflow: hidden; text-overflow: ellipsis; white-space: nowrap; }
.wavebox { margin: 3px 4px 4px; border: 1px solid var(--line); background: #1b2029; padding: 0 3px; }
.preview { display: flex; align-items: center; gap: 4px; padding: 0 4px 4px; }
.pv { width: 28px; height: 28px; border: 1px solid #333; border-radius: 5px; background: #191919; display: grid; place-items: center; color: #c3c3c3; } .pv.off { color: #3c3d40; background: #14171c; border-color: #20242a; }
.auto { margin-left: 7px; width: 39px; font-size: 9px; font-weight: 500; }
.gain { appearance: none; width: 102px; height: 6px; border-radius: 3px; background: #292e36; margin-left: 35px; }
.gain::-webkit-slider-thumb { appearance: none; width: 12px; height: 12px; border-radius: 6px; background: #a8a8a8; }

/* chain */
.chainbar { height: 28px; flex: none; display: flex; justify-content: space-between; align-items: center; border-bottom: 1px solid var(--line); padding: 0 8px 0 7px; }
.cb-left, .cb-right, .pair { display: flex; align-items: center; gap: 2px; }
.cb { width: 20px; height: 20px; border: 1px solid #2f363f; border-radius: 3px; background: #171b22; color: #c3c7cc; display: grid; place-items: center; }
.cb.gap { margin-left: 6px; } .cb.gap2 { margin-left: 2px; } .cb.blue { color: var(--blue); } .cb.indigo { color: #5c7ae0; }
.cb-right { gap: 4px; } .cb-right b { margin-right: 9px; font-size: 9px; } .cb.nar { width: 18px; background: var(--ctl); } .pair { margin-left: 4px; }
.cb-right .fader { width: 60px; height: 20px; flex: none; } .cb.pan { width: 30px; background: var(--ctl); } .cb.power { width: 17px; background: #33945b; border-color: #33945b; color: #fff; }
.chain { height: 321px; flex: none; display: flex; gap: 12px; padding: 8px 14px 8px 7px; border-bottom: 1px solid #232932; }
.device { background: #131417; border: 1px solid #272c33; border-radius: 4px; display: flex; flex-direction: column; }
.fm { width: 762px; } .sc { width: 522px; }
.device header { height: 24px; display: flex; align-items: center; gap: 4px; padding: 0 2px 0 4px; border-bottom: 1px solid var(--line); color: #777c83; }
.device header svg:nth-child(2) { margin-left: 4px; }
h2 { font-size: 9px; line-height: 14px; margin: 0 auto 0 7px; color: #fff; font-weight: 700; }
.hb { width: 18px; height: 19px; border: 0; border-radius: 3px; color: #fff; display: grid; place-items: center; font-size: 9px; line-height: 10px; font-weight: 600; }
.hb.indigo { background: #5373cd; } .hb.green { background: #2f8f59; } .hb.plum { background: #774a78; } .hb.orange { background: #c76a1b; } .hb.dark { background: #1b2028; color: #c3c7cc; }
.vendor { font-size: 8px; line-height: 25px; height: 26px; padding-left: 5px; color: var(--mute); border-bottom: 1px solid var(--line); }
.dev-body { flex: 1; display: flex; justify-content: space-between; padding-right: 1px; }
.vmeter { border-left: 0; margin-top: 3px; }
.fm-ui { flex: 1; margin: 4px 5px 6px; background: var(--deep); display: flex; padding: 7px 9px 0 8px; gap: 13px; box-shadow: 0 0 0 1px #101115; }
.dev-body > :first-child { margin-right: 8px; }
h3 { font-size: 8px; line-height: 14px; font-weight: 600; color: #b5bac4; }
.fm-left { flex: 1; }
.matrix { display: grid; grid-template-columns: 17px repeat(4, 1fr); grid-template-rows: 10px; gap: 6px; color: var(--blue); font-size: 8px; line-height: 10px; font-weight: 600; align-items: center; text-align: center; margin: 2px 0 7px; }
.matrix input, .ops input, .adsr input, .pairs input, .sc-params input { border: 1px solid var(--line); border-radius: 2px; background: var(--ctl); color: #f2f3f5; text-align: center; width: 100%; outline: 0; font-size: 10px; font-weight: 500; }
.matrix input { height: 16px; }
.ops { display: grid; grid-template-columns: repeat(4, 1fr); gap: 6px; padding: 3px 0 0 23px; }
.op > b { display: block; background: var(--blue); text-align: center; font-size: 8px; line-height: 16px; color: #fff; }
.waves { display: flex; margin: 8px 0 6px; }
.waves button { width: 22px; height: 19px; border: 1px solid transparent; background: none; color: #6a6e73; display: grid; place-items: center; border-radius: 2px; }
.waves button:first-child { background: #21384a; border-color: #3f6a8a; color: #fff; }
.opv { display: grid; grid-template-columns: 44px 45px 22px; column-gap: 1px; font-size: 9px; line-height: 12px; color: var(--mute); align-items: end; }
.opv label { display: block; text-indent: 5px; } .opv input { height: 29px; display: block; text-indent: 0; }
.opv button { height: 29px; border: 1px solid var(--line); background: #232326; font-size: 8px; line-height: 10px; font-weight: 600; color: #c3c7cc; }
.fm-right { width: 206px; }
.env { margin: 4px 0 7px 2px; }
.adsr { display: grid; grid-template-columns: repeat(4, 46px); gap: 6px; }
.adsr label, .pairs label { font-size: 9px; line-height: 13px; color: var(--mute); text-indent: 5px; } 
.adsr input, .pairs input { display: block; text-indent: 0; }
.adsr input { height: 21px; margin-top: -1px; }
.pairs { display: grid; grid-template-columns: 99px 99px; gap: 5px 6px; margin-top: 5px; }
.pairs input { height: 27px; }
.sc-ui { flex: 1; margin: 4px 5px 6px; border: 1px solid var(--line); background: #15191d; padding: 7px 5px 0; }
.sc-params { display: grid; grid-template-columns: repeat(6, 75px); gap: 4px; padding: 2px 2px 0; text-align: center; font-size: 8px; line-height: 12px; color: var(--mute); }
.sc-params input, .sc-params button { display: block; width: 100%; height: 18px; font-size: 8px; line-height: 12px; margin-top: 1px; font-weight: 600; }
.sc-params span { display: block; } .sc-params .duo { display: flex; }
.sc-params button { border: 1px solid #1b1c1f; background: #1b1c1f; color: #e3e6ea; border-radius: 2px; } .sc-params .on { background: #3c5c72; border-color: #48708b; }
.sc-params .lit { background: #292f38; }
.adddev { margin: 10px 0 9px auto; width: 45px; border: 1px solid #202e3b; border-radius: 4px; background: #192028; display: grid; place-items: center; }
.adddev button { width: 20px; height: 20px; border: 1px solid #2c4355; border-radius: 3px; background: #243645; display: grid; place-items: center; color: #fff; }

/* status */
.status { flex: none; height: 39px; display: grid; grid-template-columns: 1fr auto 1fr; align-items: center; padding: 0 11px; }
.script { justify-self: start; background: var(--ctl); border-radius: 4px; height: 20px; padding: 0 5px; display: flex; align-items: center; gap: 4px; font-size: 9px; font-weight: 500; }
.script i { width: 6px; height: 6px; border-radius: 3px; background: #5a6068; }
.views { display: flex; gap: 23px; align-items: center; } .views .on { width: 30px; height: 31px; border-radius: 4px; background: #3d2a1c; color: #ff8a1f; }
.srv { justify-self: end; display: flex; gap: 10px; align-items: center; } .srv .bare { position: relative; } .srv .bare:last-child { margin-left: 7px; }
.b1::after, .b2::after { content: ""; position: absolute; right: -1px; bottom: -1px; width: 5px; height: 5px; border-radius: 3px; background: #f0b93a; } .b2::after { background: #33b873; }
.cursor { position: absolute; right: 9px; bottom: 28px; }
```
FILE: app.js
```js
const $ = s => document.querySelector(s);
const $$ = s => [...document.querySelectorAll(s)];
const ico = (id, w, h) => `<svg width="${w}" height="${h}"><use href="#${id}"/></svg>`;

// transport
$('#transport').innerHTML = [['rewind', 21, 18], ['prev', 20, 18], ['next', 20, 18], ['play', 19, 19], ['stop', 18, 18], ['dot', 19, 19], ['nodesw', 23, 28], ['loop', 23, 27], ['playfrom', 21, 22]]
  .map(([n, w, h]) => `<button class="tbtn${n === 'play' ? ' on' : ''}" aria-label="${n}">${ico(n, w, h)}</button>`).join('');

$$('.posbox').forEach(b => {
  b.innerHTML = b.dataset.pos.split(';').map(r => {
    const [t, a, c, d, e] = r.split('|');
    const end = e[0] === '@' ? ico(e.slice(1), 12, 9) : `<small class="tag">${e}</small>`;
    return `<small>${t}</small><span>${a}</span><span>•</span><span>${c}</span><span>•</span><span>${d}</span>${end}`;
  }).join('');
});

// channel strips
const strip = hot => [['speaker', 15, 12], ['ring', 13, 13], ['dot', 13, 13], ['link', 17, 7], ['nodes', 13, 11]]
  .map(([n, w, h], i) => `<button class="ib${hot && i === 4 ? ' hot' : ''}" aria-label="${n}">${ico(n, w, h)}</button>`).join('');
$('[data-strip]').innerHTML = strip(false);

$$('.toolrow').forEach(r => {
  r.innerHTML = r.dataset.icons.split(' ').map(n => {
    const s = { pin: [12, 16], harrow: [15, 10], varrow: [10, 15] }[n] || [16, 16];
    return `<button class="ib ${n}" aria-label="${n}">${ico(n, ...s)}</button>`;
  }).join('');
});

const tracks = [
  { name: 'Drums', color: '#2f7aa9', top: 41, fill: 44, yellow: 50 },
  { name: 'Bass', color: '#2a8662', top: 52, fill: 52, yellow: 0 },
  { name: 'Keys', color: '#6f8a35', top: 28, fill: 33, yellow: 50, hot: true }
];
$('#heads').innerHTML = tracks.map((t, i) => {
  const col = x => `<rect x="${x}" y="${t.fill}" width="9" height="${76 - t.fill}" fill="#57ab57"/>` +
    (t.yellow ? `<rect x="${x}" y="${t.fill}" width="9" height="${t.yellow - t.fill + 4}" fill="url(#tg${i})"/><rect x="${x}" y="${t.top}" width="9" height="2" fill="#8f8e49"/>` : '');
  return `<div class="track"><div class="thead"><i style="background:${t.color}"></i><b>${t.name}</b><u></u></div>
  <svg class="m" width="20" height="76"><defs><linearGradient id="tg${i}" x1="0" x2="0" y1="0" y2="1"><stop offset=".5" stop-color="#aaa957"/><stop offset="1" stop-color="#57ab57"/></linearGradient></defs>${col(0)}${col(11)}</svg>
  <div class="tbody"><div class="row"><label class="fader"><input type="range" value="75" aria-label="${t.name} volume"><output>0.0</output></label><button class="ib pan">C</button></div><div class="row btn-row">${strip(t.hot)}</div></div></div>`;
}).join('');

// timeline geometry
const BAR = 34.5, X17 = 28, W = 4000;
const bx = n => X17 + (n - 17) * BAR;
const rect = (x, y, w, h, f, o = '') => `<rect x="${x}" y="${y}" width="${w}" height="${h}" fill="${f}" ${o}/>`;

let r = rect(0, 0, W, 84, '#161a22') + rect(0, 23, W, 2, '#222831') + rect(0, 60, W, 1, '#222831') + rect(0, 72, W, 1, '#1e232c') + rect(0, 82, W, 2, '#222831');
for (let n = 17; n <= 45; n += 2) r += `<text x="${bx(n)}" y="47" class="bar">${n}</text>` + rect(bx(n) - 1, 72, 2, 12, '#6f7074');
r += `<path d="M${bx(33) - 6} 72h12l-6 12z" fill="#fff"/>`;
$('#ruler').innerHTML = `<style>.bar{font:700 12px Inter,sans-serif;fill:#f2f3f5;text-anchor:middle}</style>` + r;

let s = rect(0, 0, W, 308, '#1a1f27');
s += `<defs><linearGradient id="sh"><stop offset="0" stop-color="#000" stop-opacity=".45"/><stop offset="1" stop-color="#000" stop-opacity="0"/></linearGradient></defs>`;
[0, 1, 2].forEach(i => s += rect(0, i * 83 + 81, W, 3, '#2b343f'));
const clip = (row, x, head, body) => rect(x, row * 83 + 2, W, 79, body) + rect(x, row * 83 + 2, W, 18, head);
s += clip(0, bx(17), '#2f7aa9', '#245d80') + clip(1, bx(17), '#2a8662', '#20664a') + clip(2, 0, '#797728', '#5b5a20');
s += rect(bx(17), 80, W, 1, '#2f7aa9') + rect(bx(17), 163, W, 1, '#2a8662') + rect(0, 246, W, 1, '#797728');
for (let n = 18; n < 80; n++) {
  s += rect(bx(n), 2, 5, 78, 'url(#sh)');
  if (n % 2 === 0) s += rect(bx(n) - 1, 2, 1, 79, '#b5c6d2');
}
for (let n = 17; n < 80; n += 4) {
  if (n > 17) s += rect(bx(n), 85, 5, 79, 'url(#sh)');
  s += rect(bx(n), 168, 6, 79, 'url(#sh)');
}
for (let x = bx(17), k = 0; x < 1500; x += 4.3125, k++) s += rect(x, 75, 3.6, 2, '#05090c') + (k % 3 ? rect(x, 77, k % 4 ? 2 : 4, 1.3, '#05090c') : '');
const bass = [[0, 13, 89], [13, 21, 87], [21, 26, 86], [26, 34, 84.6], [34, 43, 89], [43, 52, 82.6], [52, 56, 84], [56, 64, 84.6], [64, 69, 86], [69, 82, 87], [82, 86, 84.6], [86, 95, 82.6], [95, 103, 83.6], [103, 112, 84.6], [112, 121, 86.3], [121, 129, 87.6], [129, 138, 89]];
const chord = [[0, 17.5, 208.5], [17.5, 34.5, 212.5], [34.5, 52, 209.5], [52, 69, 206], [69, 86, 211], [86, 103.500, 212.5], [103.500, 138, 208.5]];
for (let n = 13; n < 60; n += 4) {
  const o = bx(n);
  if (n >= 17) bass.forEach(([a, b, y]) => s += rect(o + a, y + 54.500, b - a, 2, '#04100b'));
  chord.forEach(([a, b, y]) => s += rect(o + a, y, b - a, 9, '#1f1f0b') + rect(o + a, y, b - a, 3, '#050502') + rect(o + a, y + 4.5, b - a, 1.500, '#050502') + rect(o + a, y + 6.500, b - a, 2.5, '#050502'));
}
s += rect(0, 249, W, 24, '#222') + rect(0, 272, W, 36, '#191919');
[272, 282, 287, 293, 299, 304].forEach(y => s += rect(0, y, W, 1, '#333'));
s += `<path d="M0 284L28 282L97 299H${W}V308H0z" fill="#7a72dd" fill-opacity=".12"/><path d="M0 284L28 282L97 299H${W}" fill="none" stroke="#7d76e8" stroke-width="2"/>`;
for (let n = 17; n < 80; n += 2) s += rect(bx(n) - 1, 0, 2, 308, '#707074');
for (let n = 17; n < 80; n += 4) {
  if (n > 17) s += `<path d="M${bx(n) - 6} 85h12l-6 6z" fill="#c3ccc8"/>`;
  s += `<path d="M${bx(n) - 6} 168h12l-6 6z" fill="#cccbb8"/>`;
}
s += `<text x="${bx(17) + 4}" y="14" class="cl">MIDI 65 R R</text><text x="${bx(17) + 4}" y="97" class="cl">Groovy E minor bassline over 4 bars</text>`;
s += rect(80, 274, 34, 14, '#222', 'rx="2"') + `<text x="97" y="285" class="tip">1.5 kHz</text>`;
s += rect(26, 280, 4, 4, '#ff8a1f') + rect(95, 297, 4, 4, '#ff8a1f') + `<circle cx="63" cy="290.500" r="3.500" fill="#111" stroke="#f2f2f2" stroke-width="1.400"/>`;
s += rect(954, 9, 2, 299, '#dfe3e6');
$('#lanes').innerHTML = `<style>.cl{font:8px Inter,sans-serif;fill:#0a1512}.tip{font:8px Inter,sans-serif;fill:#f2f3f5;text-anchor:middle}</style>` + s;

let o = rect(0, 0, W, 83, '#161a22') + rect(0, 0, W, 12, '#1e232d') + rect(0, 0, W, 1, '#2d3741') + rect(0, 82, W, 1, '#2d3741');
for (let i = 0; i < 9; i++) {
  const x = Math.round(8 + i * 115.800);
  o += rect(x, 12, 1, 70, '#232932') + `<text x="${x + 2}" y="9" class="ov">${1 + i * 32}</text>`;
}
[[8, 29, 14, '#457798'], [66, 260, 14, '#457798'], [66, 231, 22.500, '#45946f'], [8, 347, 31, '#8f8f4d'], [95, 231, 39.500, '#937650']].forEach(([x, w, y, c]) => o += rect(x, y, w, 8, c));
o += `<rect x="64" y="12" width="103" height="70" fill="#5a9ae0" fill-opacity=".2" stroke="#61a8f7" stroke-width="1.500"/>` + rect(163, 12, 1, 70, '#e08a4a');
$('#overview').innerHTML = `<style>.ov{font:8px "DejaVu Sans Mono",monospace;fill:#7d838b}</style>` + o;

// samples
const pick = (c, v) => `<label class="pick chip ${c}"><select aria-label="${v}"><option>${v}</option></select>${ico('tri', 8, 6)}</label>`;
$('#samples').innerHTML = [['150_electric_gui', 148, 'D maj', '16.8s'], ['85_electric_guit', '-', 'E maj', '22.6s'], ['electric_guitar_', 179, 'F maj', '6.0s'], ['electric_guitar_', 155, 'G maj', '5.2s'], ['electric_guitar_', 182, 'F maj', '5.2s'], ['electric_guitar_', 126, 'E min', '5.2s'], ['electric_guitar_', '-', 'F maj', '6.0s']]
  .map(([n, b, k, d]) => `<tr><td>SA_MU_${n}...</td><td></td><td>${pick('', 'guitar')}</td><td>${pick('loop', 'loop')}</td><td>${b}</td><td>${k}</td><td>${d}</td><td></td></tr>`).join('');

// waveform: attack positions with amplitudes, decaying between them
const wave = (cy, hits) => {
  let up = '', dn = '';
  for (let x = 0; x <= 430; x++) {
    let a = 2;
    hits.forEach(([p, h]) => { if (x >= p && x < p + 60) a = Math.max(a, 1.5 + h * Math.exp(-(x - p) / 26)); });
    a += Math.abs(Math.sin(x * 12.9) * Math.sin(x * 3.1)) * (x > 19 ? 1 : .2) - .4;
    up += `L${x} ${(cy - a).toFixed(1)}`;
    dn = `L${x} ${(cy + a * .9).toFixed(1)}` + dn;
  }
  return `<path fill="#5688ae" d="M0 ${cy}${up}${dn}z"/><path stroke="#3d6280" d="M430 ${cy}h34"/>`;
};
$('#wave').innerHTML = wave(11, [[19, 2.5], [40, 2.5], [80, 1.500], [127, 3.500], [148, 2], [200, 1.500], [234, 3.500], [255, 2], [296, 3], [310, 3], [345, 2.500], [362, 2.500], [385, 2], [416, 2.500]]) +
  wave(27, [[19, 2.5], [40, 2.5], [80, 2], [100, 2], [127, 2.5], [148, 5], [200, 2.500], [234, 2], [255, 3.500], [310, 3], [335, 2], [362, 3.500], [385, 2], [416, 3]]);

// FM device
$('#matrix').innerHTML = '<span></span>' + [1, 2, 3, 4].map(n => `<span>→${n}</span>`).join('') +
  [1, 2, 3, 4].map(row => `<span>${row}→</span>` + [1, 2, 3, 4].map(c => `<input aria-label="${row} to ${c}" value="${row === 2 && c === 1 ? '2.00' : '0.00'}">`).join('')).join('');
$('#ops').innerHTML = [['1.0', '0.0 dB'], ['2.0', '-inf'], ['1.0', '-inf'], ['1.0', '-inf']].map(([a, b], i) =>
  `<div class="op"><b>OP ${i + 1}</b><div class="waves">${['sine', 'tri', 'saw', 'sq', 'noise'].map(w => `<button aria-label="${w}">${ico('w-' + w, 18, 16)}</button>`).join('')}</div>
  <div class="opv"><label>Ratio<input value="${a}"></label><label>Level<input value="${b}"></label><button>R</button></div></div>`).join('');

// sidechain curve
let pts = '';
for (let i = 0; i <= 100; i++) pts += `L${(24 + i * 4.28).toFixed(1)} ${(171 - 147 * Math.pow(i / 100, 2.98)).toFixed(1)}`;
$('#scline').setAttribute('d', 'M24 171' + pts);
$('#scfill').setAttribute('d', 'M24 171' + pts + 'V171z');
```
